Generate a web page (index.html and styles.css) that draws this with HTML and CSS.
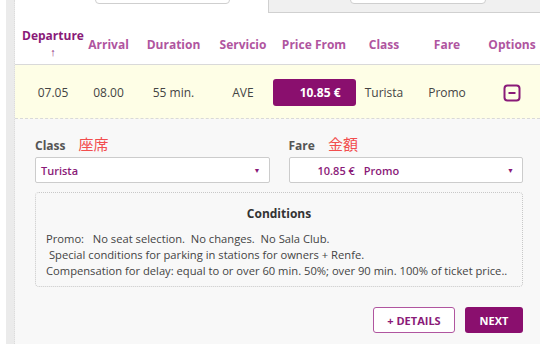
FILE: index.html
```html
<!DOCTYPE html>
<html lang="en">
<head>
  <meta charset="UTF-8">
  <meta name="viewport" content="width=device-width, initial-scale=1.0">
  <title>Train Results</title>
  <link rel="stylesheet" href="styles.css">
</head>
<body>
  <div class="page">
    <div class="rail"></div>
    <div class="content">
      <!-- Search tabs (cut off at top) -->
      <div class="tabs">
        <div class="tab tab-active"><div class="field"></div></div>
        <div class="tab tab-idle"><div class="field"></div></div>
      </div>

      <!-- Results table -->
      <div class="row head">
        <div class="cell sorted">Departure<span class="arrow">&#8593;</span></div>
        <div class="cell">Arrival</div>
        <div class="cell">Duration</div>
        <div class="cell">Servicio</div>
        <div class="cell">Price From</div>
        <div class="cell">Class</div>
        <div class="cell">Fare</div>
        <div class="cell">Options</div>
      </div>
      <div class="row trip">
        <div class="cell">07.05</div>
        <div class="cell">08.00</div>
        <div class="cell">55 min.</div>
        <div class="cell">AVE</div>
        <div class="cell"><span class="price">10.85 €</span></div>
        <div class="cell">Turista</div>
        <div class="cell">Promo</div>
        <div class="cell">
          <svg class="toggle" width="18" height="18" viewBox="0 0 18 18">
            <rect x="1.5" y="1.5" width="15" height="15" rx="3" fill="none" stroke="#8a1a78" stroke-width="2"/>
            <line x1="5.5" y1="9" x2="12.5" y2="9" stroke="#8a1a78" stroke-width="2"/>
          </svg>
        </div>
      </div>

      <!-- Expanded detail panel -->
      <div class="detail">
        <div class="choices">
          <div class="choice">
            <div class="label">Class <span class="cjk">座席</span></div>
            <div class="select"><span>Turista</span><span class="caret">&#9660;</span></div>
          </div>
          <div class="choice">
            <div class="label">Fare <span class="cjk">金額</span></div>
            <div class="select"><span><span class="amount">10.85 €</span>Promo</span><span class="caret">&#9660;</span></div>
          </div>
        </div>

        <div class="conditions">
          <div class="cond-title">Conditions</div>
          <div class="cond-text">Promo:   No seat selection.  No changes.  No Sala Club.
 Special conditions for parking in stations for owners + Renfe.
Compensation for delay: equal to or over 60 min. 50%; over 90 min. 100% of ticket price..</div>
        </div>

        <div class="actions">
          <button class="btn btn-outline">+ DETAILS</button>
          <button class="btn btn-solid">NEXT</button>
        </div>
      </div>
    </div>
  </div>
</body>
</html>
```

FILE: styles.css
```css
:root {
  --purple: #8a0f6e;
  --purple-light: #b0559f;
  --text: #444444;
  --line: #d9d9d9;
  --panel: #f8f8f8;
}

body {
  margin: 0;
  font-family: "Open Sans", "Noto Sans", sans-serif;
  color: var(--text);
  background: #ffffff;
}

.page {
  display: flex;
  min-height: 344px;
  padding-left: 6px;
}

.rail {
  width: 8px;
  background: #ebebeb;
  border-right: 1px dotted #dcdcdc;
}

.content {
  flex: 1;
  display: flex;
  flex-direction: column;
}

/* Tabs */
.tabs {
  display: flex;
  height: 24px;
}

.tab {
  position: relative;
}

.tab-active {
  width: 253px;
}

.tab-idle {
  flex: 1;
  height: 12px;
  background: #f0f0f0;
  border-left: 1px solid #d0d0d0;
  border-bottom: 1px solid #d0d0d0;
}

.field {
  position: absolute;
  top: -6px;
  height: 8px;
  background: #ffffff;
  border: 1px solid #cfcfcf;
  border-radius: 4px;
}

.tab-active .field {
  left: 80px;
  width: 133px;
}

.tab-idle .field {
  left: 81px;
  width: 134px;
}

/* Table */
.row {
  display: grid;
  grid-template-columns: 76px 35px 95px 44px 98px 42px 84px 46px;
  align-items: center;
  justify-items: center;
  white-space: nowrap;
}

.head {
  height: 40px;
  font-size: 12px;
  font-weight: 700;
  color: var(--purple-light);
  border-bottom: 1px solid var(--line);
}

.head .sorted {
  display: flex;
  flex-direction: column;
  align-items: center;
  line-height: 16px;
  color: #8a1a78;
}

.arrow {
  font-size: 11px;
}

.trip {
  height: 54px;
  padding-top: 2px;
  box-sizing: border-box;
  background: #fefee6;
  font-size: 12px;
  color: #444;
  border-bottom: 1px dashed var(--line);
}

.price {
  display: block;
  width: 83px;
  height: 27px;
  line-height: 27px;
  padding-right: 15px;
  box-sizing: border-box;
  text-align: right;
  background: var(--purple);
  color: #fff;
  font-weight: 700;
  border-radius: 3px;
}

.toggle {
  display: block;
}

/* Detail panel */
.detail {
  flex: 1;
  background: var(--panel);
  padding: 14px 17px 0 20px;
}

.choices {
  display: grid;
  grid-template-columns: 1fr 1fr;
  gap: 19px;
}

.label {
  font-size: 12px;
  font-weight: 700;
  color: #555;
  height: 22px;
  line-height: 22px;
}

.cjk {
  font-family: "Noto Sans CJK JP", sans-serif;
  font-weight: 400;
  font-size: 15px;
  color: #f24e4e;
  margin-left: 10px;
}

.select {
  margin-top: 2px;
  height: 26px;
  box-sizing: border-box;
  display: flex;
  align-items: center;
  justify-content: space-between;
  padding: 0 8px 0 5px;
  background: #fff;
  border: 1px solid #cccccc;
  border-radius: 2px;
  font-size: 11px;
  font-weight: 600;
  color: #8a1a78;
}

.caret {
  font-size: 7px;
}

.amount {
  display: inline-block;
  margin: 0 9px 0 23px;
}

.conditions {
  margin-top: 9px;
  height: 95px;
  box-sizing: border-box;
  border: 1px dotted #c8c8c8;
  border-radius: 4px;
  padding: 12px 10px 0 10px;
}

.cond-title {
  text-align: center;
  font-size: 12px;
  font-weight: 700;
  color: #333;
}

.cond-text {
  margin-top: 9px;
  font-size: 11.2px;
  line-height: 16px;
  white-space: pre-wrap;
  color: #444;
}

.actions {
  display: flex;
  justify-content: flex-end;
  gap: 10px;
  margin-top: 20px;
}

.btn {
  height: 26px;
  padding: 0;
  font-family: inherit;
  font-size: 11px;
  font-weight: 700;
  border-radius: 3px;
  cursor: pointer;
}

.btn-outline {
  width: 82px;
  background: #fff;
  color: #8a1a78;
  border: 1px solid #b0559f;
}

.btn-solid {
  width: 58px;
  background: var(--purple);
  color: #fff;
  border: none;
}
```
